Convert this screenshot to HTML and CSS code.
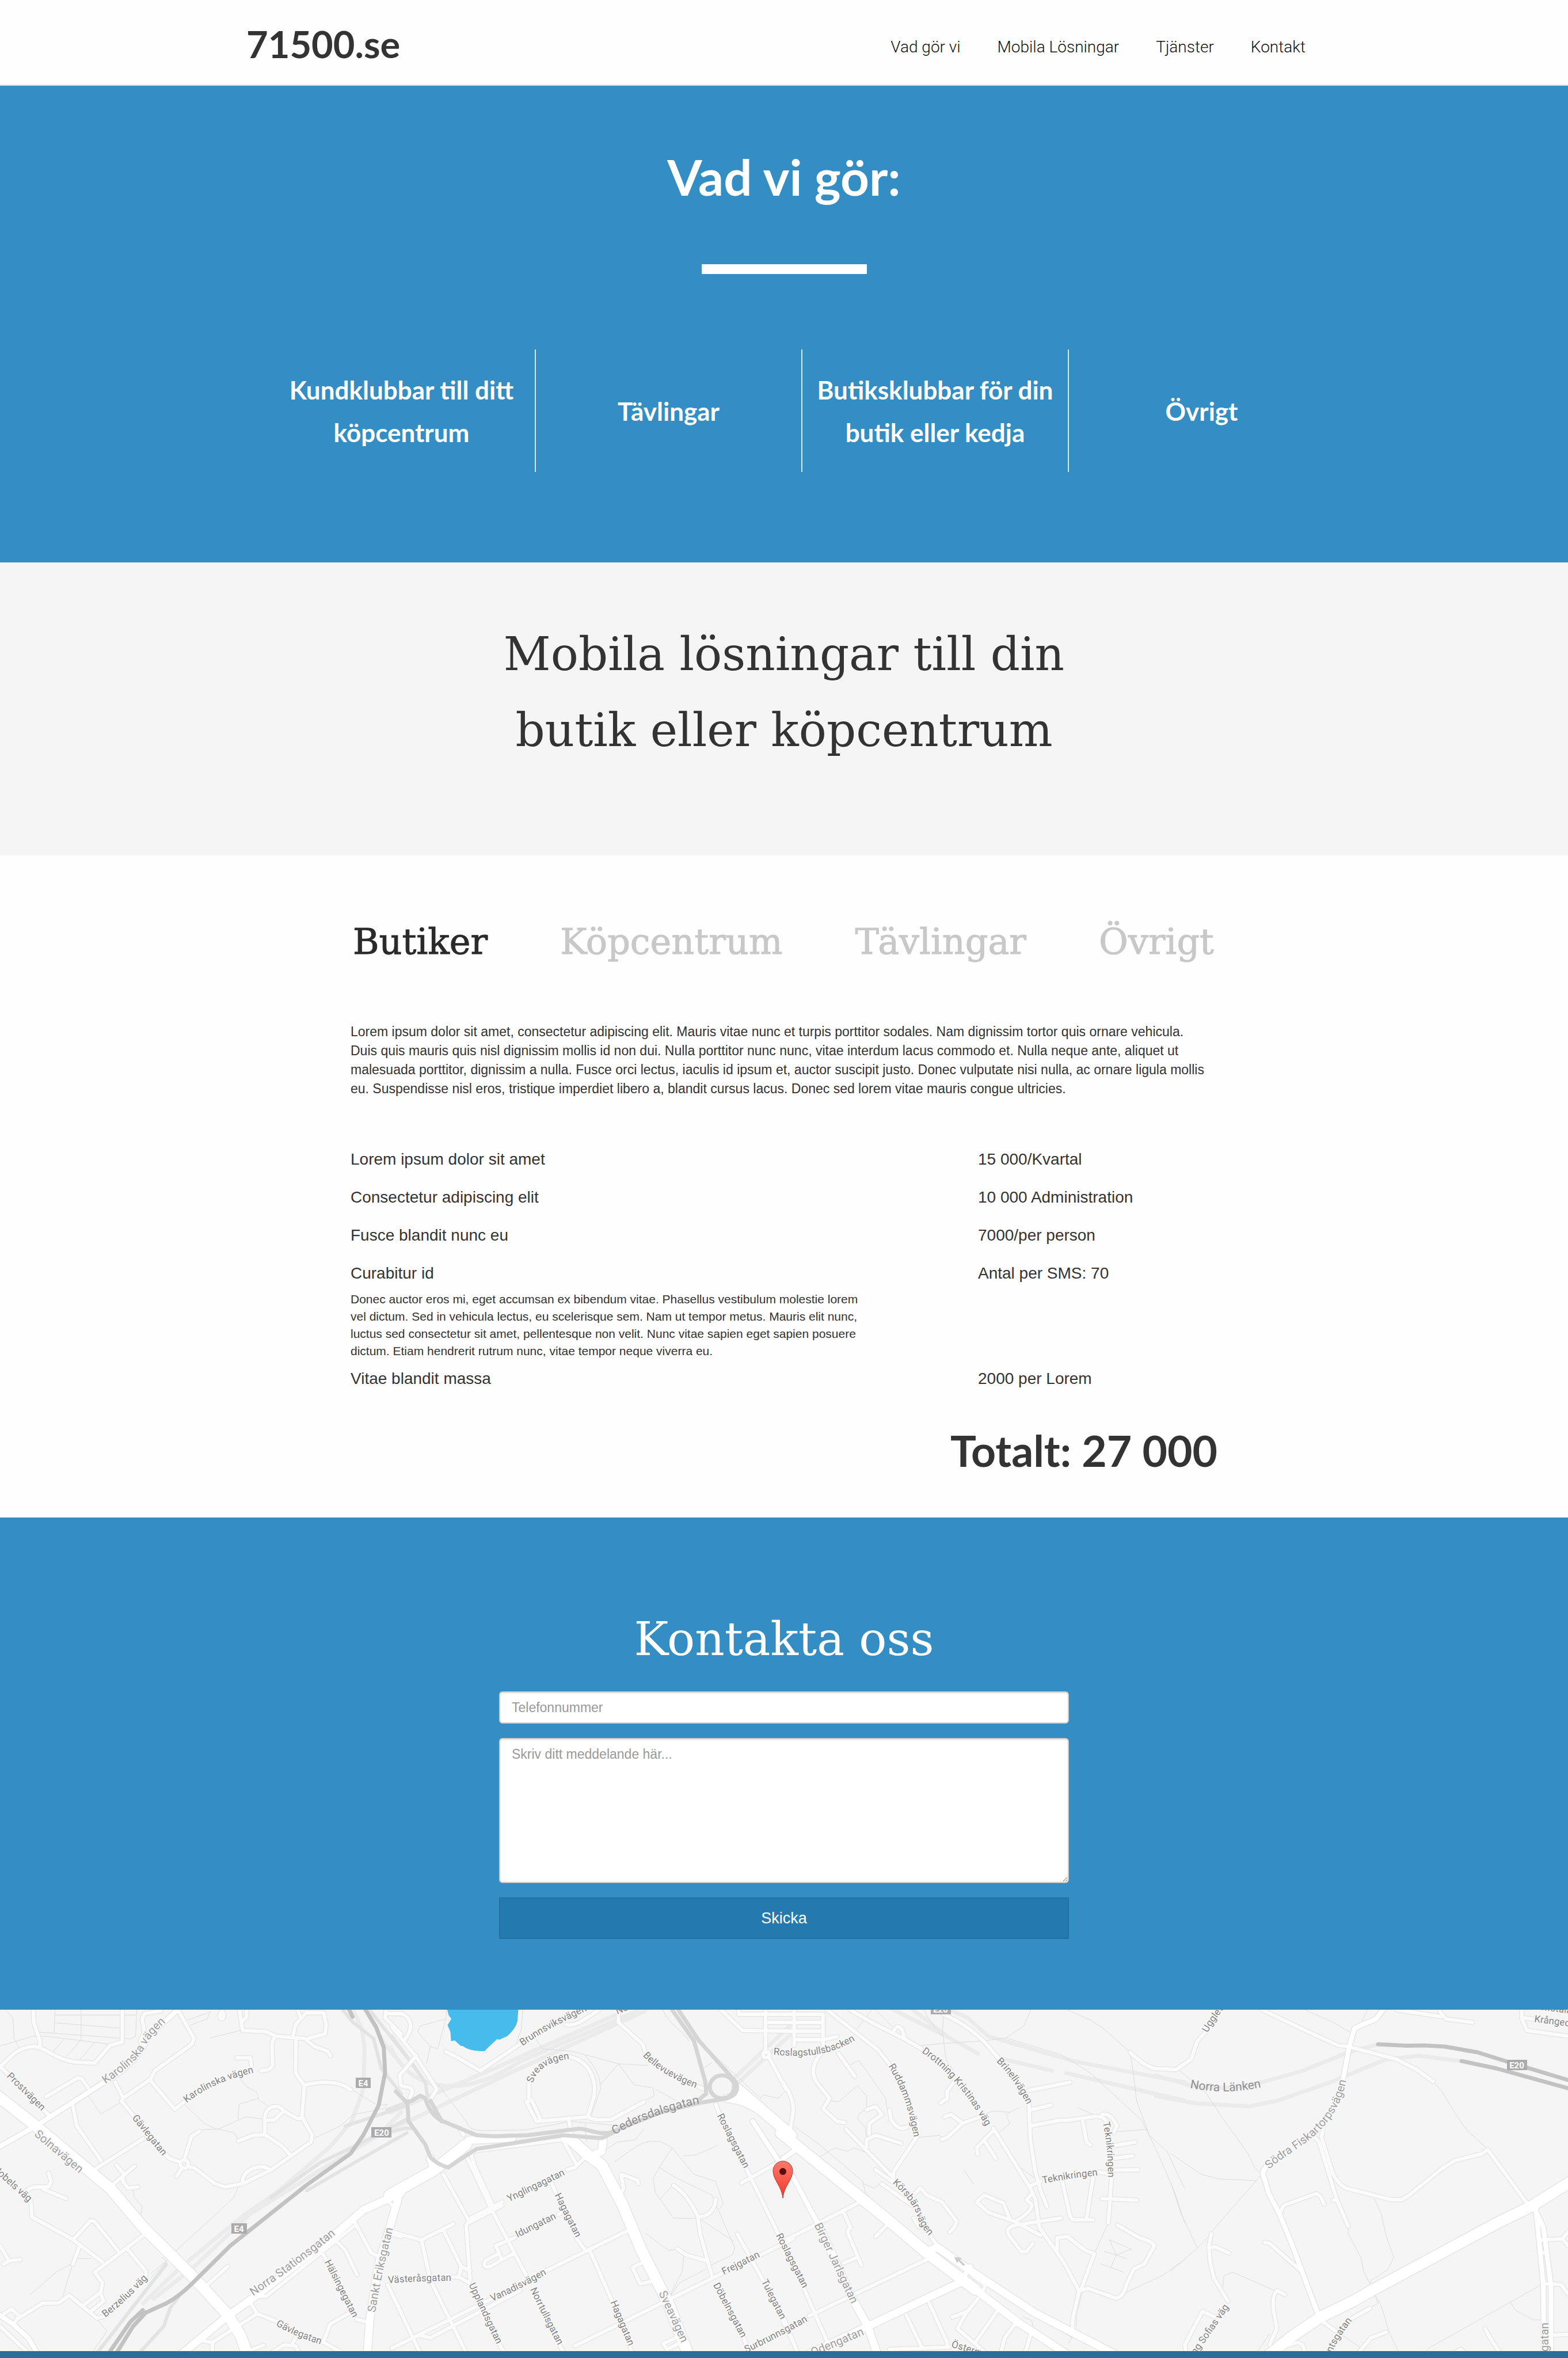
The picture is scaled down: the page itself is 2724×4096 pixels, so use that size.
FILE: index.html
```html
<!DOCTYPE html>
<html lang="sv">
<head>
<meta charset="utf-8">
<meta name="viewport" content="width=device-width, initial-scale=1">
<title>71500.se</title>
<link rel="stylesheet" href="styles.css">
</head>
<body>
<header class="site-header">
  <div class="container header-row">
    <a class="brand" href="#">71500.se</a>
    <nav class="main-nav">
      <a href="#gor">Vad gör vi</a>
      <a href="#mobila">Mobila Lösningar</a>
      <a href="#tjanster">Tjänster</a>
      <a href="#kontakt">Kontakt</a>
    </nav>
  </div>
</header>
<main>
  <section class="hero" id="gor">
    <h1 class="hero-title">Vad vi gör:</h1>
    <div class="hero-bar"></div>
    <ul class="container services">
      <li>Kundklubbar till ditt köpcentrum</li>
      <li>Tävlingar</li>
      <li>Butiksklubbar för din butik eller kedja</li>
      <li>Övrigt</li>
    </ul>
  </section>
  <section class="intro" id="mobila">
    <h2 class="slab-title">Mobila lösningar till din<br>butik eller köpcentrum</h2>
  </section>
  <section class="pricing" id="tjanster">
    <nav class="tabs">
      <a class="tab tab-active" href="#butiker">Butiker</a>
      <a class="tab" href="#kopcentrum">Köpcentrum</a>
      <a class="tab" href="#tavlingar">Tävlingar</a>
      <a class="tab" href="#ovrigt">Övrigt</a>
    </nav>
    <p class="lead">Lorem ipsum dolor sit amet, consectetur adipiscing elit. Mauris vitae nunc et turpis porttitor sodales. Nam dignissim tortor quis ornare vehicula. Duis quis mauris quis nisl dignissim mollis id non dui. Nulla porttitor nunc nunc, vitae interdum lacus commodo et. Nulla neque ante, aliquet ut malesuada porttitor, dignissim a nulla. Fusce orci lectus, iaculis id ipsum et, auctor suscipit justo. Donec vulputate nisi nulla, ac ornare ligula mollis eu. Suspendisse nisl eros, tristique imperdiet libero a, blandit cursus lacus. Donec sed lorem vitae mauris congue ultricies.</p>
    <table class="prices">
      <tbody>
        <tr><td>Lorem ipsum dolor sit amet</td><td>15 000/Kvartal</td></tr>
        <tr><td>Consectetur adipiscing elit</td><td>10 000 Administration</td></tr>
        <tr><td>Fusce blandit nunc eu</td><td>7000/per person</td></tr>
        <tr class="with-note"><td>Curabitur id<p class="note">Donec auctor eros mi, eget accumsan ex bibendum vitae. Phasellus vestibulum molestie lorem vel dictum. Sed in vehicula lectus, eu scelerisque sem. Nam ut tempor metus. Mauris elit nunc, luctus sed consectetur sit amet, pellentesque non velit. Nunc vitae sapien eget sapien posuere dictum. Etiam hendrerit rutrum nunc, vitae tempor neque viverra eu.</p></td><td>Antal per SMS: 70</td></tr>
        <tr><td>Vitae blandit massa</td><td>2000 per Lorem</td></tr>
      </tbody>
    </table>
    <p class="total">Totalt: 27 000</p>
  </section>
  <section class="contact" id="kontakt">
    <h2 class="slab-title">Kontakta oss</h2>
    <form class="contact-form">
      <input class="field" type="tel" placeholder="Telefonnummer" aria-label="Telefonnummer">
      <textarea class="field message" placeholder="Skriv ditt meddelande här..." aria-label="Meddelande"></textarea>
      <button class="send" type="submit">Skicka</button>
    </form>
  </section>
  <svg class="map" viewBox="0 0 2724 593" role="img" aria-label="Karta">
    <defs>
      <g id="minor">
        <path transform="translate(0 -22) scale(.4445 .4)" d="M130 50L132 110 156 190V215M0 305C40 260 70 215 135 215C180 220 215 270 290 282L370 287 430 210 478 195V50M180 433L305 350 320 355 345 395M555 215L550 190 565 150 555 95 565 72 630 60M700 65L758 180 750 205 605 320 590 355 480 440 475 452 660 700 700 715M450 370L480 435M590 365L683 487 720 455M925 264H978L983 300M1020 320L1050 315 1065 300 1063 200 1072 175M0 300L190 512M283 462L300 560 395 710M365 752L560 615M430 825L525 735M455 730L482 765 480 800 500 830 540 825M704 725a16 18 0 1 0 32 0a16 18 0 1 0 -32 0M720 708L748 605 780 583M710 745L690 778M740 738L760 742 840 810 880 825 950 810 1060 750 1215 630 1220 600 1180 520 1185 450 1190 385 1155 330 1157 185M948 800C945 760 1010 715 1055 750M935 50L948 145 1040 150 1080 170 1190 180 1230 215 1280 235 1292 255M965 50L962 90 948 105M1145 170L1155 120 1200 65M1165 60L1175 90M1200 68H1265L1275 120 1270 160 1205 180M1190 382Q1310 350 1370 402M932 625L990 600 1035 598 1100 645 1138 690M1035 590V530C1035 470 1090 460 1110 495L1160 527 1185 525M1045 535H1070L1110 495M1510 50L1505 90 1568 160M1515 72H1568M868 60Q850 90 866 95Q882 90 868 60M95 845L130 825H190L200 800 190 765M170 835L258 875M120 885L125 955 280 1050 400 1150M285 1055L355 970 370 975 460 1100M370 1195L560 1035M310 1085L285 1160M495 1090L570 1190V1225M370 1195L400 1240 395 1280 330 1335M390 1280L405 1320 355 1365M65 1400L165 1330 230 1328 270 1295 380 1395 410 1385M15 1375L45 1355 75 1385 60 1410M0 1430L110 1545M0 1080L35 1145 80 1140M35 1145L15 1160M805 1255L890 1170M975 1320L1005 1375 1085 1410M1005 1375L830 1500 770 1487M830 1500V1545M1260 1497L1330 1540M1000 1300L1040 1300 1390 990M1388 980L1450 1110 1475 1125M1310 1055L1350 1100 1395 1205M1255 1105L1275 1140M1395 1400L1440 1412M1265 1495L1290 1420 1370 1370M1140 1510L1165 1460M1060 1545L1110 1510 1155 1515 1168 1545M950 1545L1030 1512M1568 1040L1530 1030M1515 1250L1568 1370M1520 890L1540 915"/>
        <path transform="translate(681 -22) scale(.4445 .4)" d="M0 130L95 260 175 400 150 445M95 255L30 340 35 385 75 395 80 410 70 440M0 72H40Q100 110 50 185M210 237L260 265 345 320 500 205M680 120C720 130 760 90 810 55M885 75V110L980 205 990 240M1200 390L1220 400M535 445V370M665 255C760 260 800 340 790 430L765 520 565 540 525 455 545 445 580 530M765 520Q790 540 860 530L985 455M690 525L700 590M668 620L718 722M320 720L310 690Q310 670 340 665L660 620M265 570L280 600M895 855L905 830 895 770 960 795 962 810M295 700L390 925 530 1220M315 715L400 920M200 770L300 970M300 965L430 890M300 980L430 905M760 690L715 740 685 750M305 1230L290 990 300 975M240 985L115 1055 0 1020M200 1010L270 1170 305 1190M270 1175L260 1215 300 1240M115 1055L150 1230 290 1545M240 1215L260 1217M480 1045L405 1080 430 1140 475 1115M415 1115L365 1145Q350 1180 385 1170L430 1140M650 945L665 935M625 810L640 850M720 1045L755 1100M775 1105L860 1320M925 1510L940 1545M920 1015L600 1190M390 1310L0 1525M500 1275L150 1480 110 1470M0 1290L110 1545M420 1510L440 1545M655 1510L670 1545M715 1515L1290 1200M1440 1120L1568 1050M975 1155L940 1175 970 1245 1015 1235M1110 1480L1060 1505 1075 1530 1120 1505M1265 465L1280 510M1385 745L1510 1030M1365 808L1530 705M1100 818Q1150 850 1195 950L1205 1030 1250 1210M1195 955Q1260 950 1265 880M1115 1093L1150 1120 1230 1145M1350 1030L1450 1230M1525 1400L1568 1500M1375 1480L1395 1545M1355 50V75H1568M1460 50V240M1460 110H1568M1285 55L1370 145 1568 148M1450 250a12 13 0 1 0 24 0a12 13 0 1 0 -24 0M1475 265L1540 400"/>
        <path transform="translate(1361 -22) scale(.4445 .4)" d="M0 75H155V240M0 110H155M0 148H155M42 50V210M42 185H155L210 172M150 240Q95 310 130 370L180 440 155 485 210 540 240 545M215 245L280 345M170 55L370 230 420 300M520 610L430 760V800M260 55L345 110 470 180 540 225M430 150Q445 110 465 145L475 180M625 75Q720 120 790 200L840 265M960 465L965 620 985 760 1005 840 1030 910M960 405L1120 370M965 490L1045 470M965 560L1080 535H1110L1220 518Q1260 520 1262 545M1245 510Q1280 500 1303 560L1290 590M1168 530L1185 630 1200 642M820 570L965 830 985 880 1000 1000 1070 1110 1100 1160 1155 1275M1290 645L1375 630M1295 700L1365 690M1285 752L1385 750M1230 760L1285 768M1282 790L1270 980M1245 875L1380 882M1210 785L1185 960M1090 800L1120 950 1130 967H1210M965 820L1005 800M970 855L950 880 970 900Q975 930 905 975L800 935 755 890 785 860 860 895 885 965M905 975L1005 1035M1085 960L910 990Q860 1000 885 1040L930 1105H950L975 1070M1070 1100V1045L1110 1040 1180 1100 1215 1115 1165 1265M1155 1275L1190 1265 1300 1308Q1330 1300 1340 1250L1370 1180 1410 1160 1450 1080Q1440 1060 1390 1045L1305 990M1155 1280L1130 1400V1435M415 490L420 530Q450 590 490 560M325 490L360 475 385 510 335 550V595M460 635L360 600 325 620V650M245 575L430 785M360 750L430 805M385 812L510 910M505 865L535 828 560 860 620 890 675 970Q680 990 650 1020M510 960L530 1000M575 1040L605 1085M630 520L655 510 700 548 770 520M700 548L640 610 620 618M665 370L640 410V440L615 460M820 580L785 620 755 655 760 682M785 625L830 700M0 1060L300 890M235 935L262 1000 250 1020 305 1165M360 1040L405 990M560 1140L100 1385M235 1155L290 1130M80 1265L190 1545M0 1390L55 1545M415 1530L650 1520M480 1380L540 1520M570 1330L640 1500V1520M660 1390L720 1365 760 1310M720 1360L680 1440 790 1545M835 1365L750 1500M905 1420L865 1480 850 1545M965 1470L945 1545M1355 240Q1410 300 1450 310L1535 315 1568 290M-3 370Q50 450 35 520L25 580M740 1210L790 1250 780 1275 750 1270"/>
        <path transform="translate(2034 -22) scale(.4403 .4)" d="M360 55L540 150 660 210 700 215 890 270 970 315 1035 367M-5 315H20L80 270 105 190 135 155M890 55L1065 85M1060 60L1085 95 1190 110M1385 50V95L1405 145 1568 170M1390 90L1430 95M560 600L585 630 655 880 700 995M600 570L595 610 640 770Q660 810 690 830L870 880 910 880 935 865 1070 745 1120 710 1230 680 1250 662 1405 895M430 940L445 905 575 853 590 865 605 900M640 883L655 880M370 1065L390 1070 520 1195M160 1028L150 1080 155 1150 170 1220 225 1320M155 1088L175 1085 230 1112M450 1292L420 1275Q400 1290 405 1360L418 1440 390 1510M60 1545L55 1510 125 1365 175 1390M600 1410L650 1450M715 1395L785 1352M740 1545L790 1480 850 1455M1240 1440L1265 1490 1300 1545M1455 1055L1545 1050 1568 1020M1545 1050L1568 1080M1465 1110H1485M1470 1245L1540 1248 1568 1290M1510 1468L1568 1465M440 1520L500 1500 520 1510 530 1545M1120 1545L1145 1530 1160 1545"/>
      </g>
      <g id="mid">
        <path transform="translate(0 -22) scale(.4445 .4)" d="M-10 655L150 553 400 375Q540 290 580 170L700 50M-10 1375L50 1420 110 1480 145 1545"/>
        <path transform="translate(1361 -22) scale(.4445 .4)" d="M-120 540L-20 710M0 700L60 655M20 745L130 975M690 1240L730 1170"/>
        <path transform="translate(2034 -22) scale(.4403 .4)" d="M840 50L810 95 725 135 705 210 680 355M375 740Q355 760 370 790L385 850 430 945 480 1080 580 1375M1440 920L1445 970 1470 1250 1472 1545M1435 920L1470 1000 1500 1250V1545"/>
      </g>
      <g id="wide">
        <path transform="translate(0 -22) scale(.4445 .4)" d="M700 1560L890 1385 1010 1290 1300 1040 1420 925 1568 850M1435 1560L1445 1400 1480 1160 1550 900 1560 850"/>
        <path transform="translate(681 -22) scale(.4445 .4)" d="M300 622L470 612M160 735L150 700M825 615L820 670 780 690M1310 440Q1400 450 1480 530"/>
        <path transform="translate(1361 -22) scale(.4445 .4)" d="M690 1240L330 1430 100 1550M135 985L270 1310 330 1430 370 1560M560 1110L600 1085 720 1180 980 1370 1310 1560M750 1270L920 1415 1120 1560"/>
      </g>
      <g id="major">
        <path transform="translate(0 -22) scale(.4445 .4)" d="M-20 420L140 560 430 830 560 1000 750 1210 890 1380 940 1470 970 1560"/>
        <path transform="translate(681 -22) scale(.4445 .4)" d="M-10 860L30 835 160 755 290 640M680 600L730 650 770 690 820 730 900 900 975 1100 1080 1330 1160 1560M1350 400L1560 600"/>
        <path transform="translate(1361 -22) scale(.4445 .4)" d="M-10 590L400 960 560 1110 750 1270"/>
        <path transform="translate(2034 -22) scale(.4403 .4)" d="M360 1580L470 1480 590 1390 720 1320 800 1270 1290 980 1420 910 1580 800"/>
      </g>
      <path id="l1" transform="translate(0 -22) scale(.4445 .4)" d="M25 345L185 520"/>
      <path id="l2" transform="translate(0 -22) scale(.4445 .4)" d="M412 378C500 310 550 260 575 200Q600 150 690 70"/>
      <path id="l3" transform="translate(0 -22) scale(.4445 .4)" d="M730 460Q840 360 1020 322"/>
      <path id="l4" transform="translate(0 -22) scale(.4445 .4)" d="M515 525L660 725"/>
      <path id="l5" transform="translate(0 -22) scale(.4445 .4)" d="M132 600L340 795"/>
      <path id="l6" transform="translate(0 -22) scale(.4445 .4)" d="M-30 750L130 910"/>
      <path id="l7" transform="translate(0 -22) scale(.4445 .4)" d="M412 1392Q510 1305 600 1195"/>
      <path id="l8" transform="translate(0 -22) scale(.4445 .4)" d="M990 1298C1080 1230 1230 1110 1350 995"/>
      <path id="l9" transform="translate(0 -22) scale(.4445 .4)" d="M1467 1370Q1490 1200 1545 970"/>
      <path id="l10" transform="translate(0 -22) scale(.4445 .4)" d="M1268 1150L1400 1440"/>
      <path id="l11" transform="translate(0 -22) scale(.4445 .4)" d="M1078 1425Q1150 1475 1290 1522"/>
      <path id="l12" transform="translate(681 -22) scale(.4445 .4)" d="M-14 1243Q100 1232 280 1232"/>
      <path id="l13" transform="translate(681 -22) scale(.4445 .4)" d="M510 213C590 150 660 110 800 40"/>
      <path id="l14" transform="translate(681 -22) scale(.4445 .4)" d="M880 75L960 40"/>
      <path id="l15" transform="translate(681 -22) scale(.4445 .4)" d="M550 375Q575 280 700 268"/>
      <path id="l16" transform="translate(681 -22) scale(.4445 .4)" d="M980 255Q1060 350 1230 412"/>
      <path id="l17" transform="translate(681 -22) scale(.4445 .4)" d="M870 598Q1000 510 1250 450"/>
      <path id="l18" transform="translate(681 -22) scale(.4445 .4)" d="M1270 515L1400 800"/>
      <path id="l19" transform="translate(681 -22) scale(.4445 .4)" d="M1500 1035L1640 1340"/>
      <path id="l20" transform="translate(681 -22) scale(.4445 .4)" d="M1490 250C1640 265 1730 250 1850 160"/>
      <path id="l21" transform="translate(681 -22) scale(.4445 .4)" d="M458 890L720 748"/>
      <path id="l22" transform="translate(681 -22) scale(.4445 .4)" d="M490 1045L690 935"/>
      <path id="l23" transform="translate(681 -22) scale(.4445 .4)" d="M635 860L745 1105"/>
      <path id="l24" transform="translate(681 -22) scale(.4445 .4)" d="M392 1322Q500 1270 650 1175"/>
      <path id="l25" transform="translate(681 -22) scale(.4445 .4)" d="M300 1250Q350 1370 440 1580"/>
      <path id="l26" transform="translate(681 -22) scale(.4445 .4)" d="M540 1270Q590 1390 680 1580"/>
      <path id="l27" transform="translate(681 -22) scale(.4445 .4)" d="M853 1325L945 1570"/>
      <path id="l28" transform="translate(681 -22) scale(.4445 .4)" d="M1042 1285L1155 1560"/>
      <path id="l29" transform="translate(681 -22) scale(.4445 .4)" d="M1255 1250L1400 1555"/>
      <path id="l30" transform="translate(681 -22) scale(.4445 .4)" d="M1443 1235L1550 1470"/>
      <path id="l31" transform="translate(681 -22) scale(.4445 .4)" d="M1297 1207L1490 1100"/>
      <path id="l32" transform="translate(681 -22) scale(.4445 .4)" d="M1385 1545Q1490 1490 1670 1380"/>
      <path id="l33" transform="translate(1361 -22) scale(.4445 .4)" d="M410 300Q490 440 515 650"/>
      <path id="l34" transform="translate(1361 -22) scale(.4445 .4)" d="M540 240Q700 360 820 620"/>
      <path id="l35" transform="translate(1361 -22) scale(.4445 .4)" d="M832 280Q915 370 970 510"/>
      <path id="l36" transform="translate(1361 -22) scale(.4445 .4)" d="M425 808Q510 890 525 960Q545 1020 610 1080"/>
      <path id="l37" transform="translate(1361 -22) scale(.4445 .4)" d="M1015 810Q1120 785 1270 770"/>
      <path id="l38" transform="translate(1361 -22) scale(.4445 .4)" d="M1248 545Q1272 660 1268 840"/>
      <path id="l39" transform="translate(1361 -22) scale(.4445 .4)" d="M120 990L290 1390"/>
      <path id="l40" transform="translate(1361 -22) scale(.4445 .4)" d="M115 1560L340 1455"/>
      <path id="l41" transform="translate(1361 -22) scale(.4445 .4)" d="M655 1520Q760 1550 900 1620"/>
      <path id="l42" transform="translate(2034 -22) scale(.4403 .4)" d="M145 155Q175 90 250 0"/>
      <path id="l43" transform="translate(2034 -22) scale(.4403 .4)" d="M75 395Q240 430 400 380"/>
      <path id="l44" transform="translate(2034 -22) scale(.4403 .4)" d="M388 748C480 650 670 600 700 310"/>
      <path id="l45" transform="translate(2034 -22) scale(.4403 .4)" d="M1433 108L1800 160"/>
      <path id="l46" transform="translate(2034 -22) scale(.4403 .4)" d="M1462 56L1700 90"/>
      <path id="l47" transform="translate(2034 -22) scale(.4403 .4)" d="M1490 1540V1350"/>
      <path id="l48" transform="translate(2034 -22) scale(.4403 .4)" d="M98 1555Q180 1430 250 1310"/>
      <path id="l49" transform="translate(2034 -22) scale(.4403 .4)" d="M635 1545Q665 1470 740 1370"/>
      <linearGradient id="pin" x1="0" y1="0" x2="0" y2="1"><stop offset="0" stop-color="#fb7a6c"/><stop offset="1" stop-color="#f2392b"/></linearGradient>
    </defs>
    <rect class="land" width="2724" height="593"/>
    <path class="water" transform="translate(681 -22) scale(.4445 .4)" d="M215 50L222 80 232 95 217 122 228 150 231 192 245 188 268 212 278 213Q300 235 362 235L375 220 410 183 420 185 450 170Q490 130 491 95L494 50Z"/>
    <g class="tunnel">
      <path transform="translate(0 -22) scale(.4445 .4)" d="M1380 55L1415 140 1425 220 1420 400 1375 540 1290 650 1080 850 950 950 700 1180 560 1330M1430 55L1500 200 1568 290M1568 500L1480 600 1240 760 980 940 750 1180 600 1310"/>
      <path transform="translate(681 -22) scale(.4445 .4)" d="M-5 220Q60 370 200 385T500 280L960 60M-5 500L400 310 540 240 870 80M-5 575L500 310 990 60M1340 350L1560 120M1355 370L1580 140"/>
      <path transform="translate(1361 -22) scale(.4445 .4)" d="M420 50L620 160 760 245M500 50L640 170M650 55L720 90 800 170 1140 280 1568 370M860 270L1050 320M1105 330L1568 450"/>
      <path transform="translate(2034 -22) scale(.4403 .4)" d="M-60 340L80 385Q220 410 360 370L520 320 700 240 820 205M-60 430L100 462 310 475 420 450 630 370 850 270 980 255 1145 278"/>
    </g>
    <g class="rail">
      <path transform="translate(0 -22) scale(.4445 .4)" d="M1335 50L1380 110 1460 180 1490 310 1568 420M1590 470L1500 505 1350 560M1590 530L1400 640 1250 720 1060 870M1590 590L1400 710 1200 840M650 1160L380 1545M700 1300L665 1350 640 1430 545 1545M1440 50L1590 260"/>
      <path transform="translate(681 -22) scale(.4445 .4)" d="M-20 490L60 455M-20 590L50 570 80 570M0 170L130 370 140 440M80 290L130 370"/>
    </g>
    <g class="walk">
      <path transform="translate(0 -22) scale(.4445 .4)" d="M0 213L130 170H180L430 205M20 55L50 90 55 180 75 220M215 50L212 155M215 78H530M215 112L470 135M150 152L510 182 530 170 535 50M317 55V185L255 265M250 183L205 240M370 198L310 275M735 100L820 65M745 122L810 95 822 60M820 178L940 145M345 430L395 508 480 452M720 465L800 550 850 575 930 535 960 520 1030 530M930 530L935 465 1010 440M930 345L965 390 1005 415 1010 445 1050 475M790 577L850 573 915 590 930 615M1230 612L1330 560 1380 510 1500 485 1515 465 1475 470 1380 405M930 825L915 870 685 1105 590 1220M520 840L525 870 557 910 550 945M630 1130L650 1145 590 1200M120 1290L225 1190 285 1155 245 1300M300 1135L355 1136M380 1400L418 1450 360 1545"/>
      <path transform="translate(681 -22) scale(.4445 .4)" d="M215 50L210 95 110 125 100 150 150 215 180 225M210 95L180 220M150 215L135 290M512 50L505 140 485 205M560 180L590 225 700 235 770 255 885 290 1000 297M750 250Q815 320 815 400L780 510M885 290L815 380M885 290L945 380 1020 395 1025 430 985 450M1055 50Q1080 110 1140 160L1160 190M1030 400L1110 450M180 380L290 540Q300 580 350 580L520 577 700 540 900 560M755 550L760 630M840 660L880 630 950 620 985 573M1205 320L1250 285M870 715L960 645Q1000 620 1050 628L1095 655 1180 770 1265 800 1295 900 1280 920M1095 655L1045 740 1020 790 1030 850 1100 960 1195 962M1095 820L1045 880M1045 740L1110 785 1250 860 1340 1090 1330 1120 1245 1165M990 1025L1080 1100 1115 1095M1205 965L1335 1060M1140 1125L1135 1190 1080 1310M1230 1180L1125 1240 1080 1310M1140 690L1190 685 1275 643M1115 55L1200 190 1440 440 1450 425 1510 440 1535 410"/>
      <path transform="translate(1361 -22) scale(.4445 .4)" d="M345 55L280 150M360 55L430 135M550 55L565 90 620 170M625 90L622 150 635 270 665 320M540 210L640 200 785 190 870 178 940 125 967 55M870 178L1085 250 1200 330 1400 535 1430 600 1480 720 1530 850 1568 980M1100 50L1200 100 1255 140 1355 240 1370 350 1380 450 1430 600 1500 670 1545 780 1568 830M1300 585L1420 575M180 450L215 455 290 385 325 430V490Q290 500 290 530L320 565 325 610M260 295L295 275 400 440 405 490M40 560L140 640 310 800 320 850 380 915M140 695L200 655 250 670 275 655 335 680M530 610L610 600 620 610M840 590L885 550 870 510 920 480M780 510L820 495 885 500M1150 480L1210 510M1270 980L1215 1115M1335 1285L1480 1210 1568 1140M310 810L355 830 385 805M800 1260L970 1380 1130 1480M935 1388L970 1405 975 1430M1145 1430V1380L1168 1280M1130 1470L1115 1505M1275 1055L1300 1120 1360 1095 1275 1055M1255 1105L1300 1120 1340 1135M1300 1120L1280 1175M1240 1158L1330 1195M705 750L742 810M925 740L980 785"/>
      <path transform="translate(2034 -22) scale(.4403 .4)" d="M35 320L135 410 200 520 305 680 330 740 355 765M355 775L215 950 160 1020M0 680L120 770 190 790 335 797M0 805L40 940 105 1090 150 1040M0 1190L105 1090M205 1260L210 1210 245 1195 410 1275M530 55L650 115 710 155M755 105L778 50M1035 367L1070 410 1130 520 1170 580 1250 660M800 870L830 940 850 1040 880 1130 855 1185 790 1230 785 1245M700 1000V1030L750 1130 760 1190 790 1255 818 1330 785 1350M805 1290L830 1340 860 1450 900 1545M1000 1545L1025 1520 1340 1325 1460 1250M1340 1325L1360 1360 1430 1402H1460M340 1545L390 1460M680 1470L745 1520"/>
    </g>
    <use href="#minor" class="minor-edge"/>
    <use href="#mid" class="mid-edge"/>
    <use href="#wide" class="wide-edge"/>
    <use href="#major" class="major-edge"/>
    <use href="#minor" class="minor-fill"/>
    <use href="#mid" class="mid-fill"/>
    <use href="#wide" class="wide-fill"/>
    <use href="#major" class="major-fill"/>
    <path class="ramp" transform="translate(681 -22) scale(.4445 .4)" d="M15 410L60 460 65 540 130 640 150 695C170 720 200 735 220 740L260 710 330 660 670 600 820 613 870 585M55 455L75 452 110 428 130 440Q150 510 190 535L330 600 400 605 530 600 730 572C780 575 790 595 850 590L1050 500 1200 460 1310 440Q1360 420 1345 370L1200 190 1110 40M150 450L195 540M1085 40L1180 190 1225 370 1228 420 1200 445M1242 390a48 50 0 1 1 96 0a48 50 0 1 1 -96 0"/>
    <g class="motorway">
      <path transform="translate(0 -22) scale(.4445 .4)" d="M1420 40L1470 130 1500 220 1505 330 1480 470 1420 600 1370 680 1200 815 900 1080 750 1245Q700 1300 650 1330L570 1370 520 1430 450 1555M558 1360L510 1410 420 1555M1360 45L1378 85"/>
      <path transform="translate(2034 -22) scale(.4403 .4)" d="M818 205L930 211 1000 210 1080 215 1210 240 1340 285 1590 368M1147 278L1285 310 1590 403"/>
    </g>
    <path class="arrow" transform="translate(1361 -22) scale(.4445 .4)" d="M668 1128L698 1134 690 1141 710 1162 704 1168 684 1147 678 1155Z"/>
    <g class="street">
      <text><textPath href="#l1">Prostvägen</textPath></text>
      <text><textPath href="#l3">Karolinska vägen</textPath></text>
      <text><textPath href="#l4">Gävlegatan</textPath></text>
      <text><textPath href="#l6">Nobels väg</textPath></text>
      <text><textPath href="#l7">Berzelius väg</textPath></text>
      <text><textPath href="#l10">Hälsingegatan</textPath></text>
      <text><textPath href="#l11">Gävlegatan</textPath></text>
      <text><textPath href="#l12">Västeråsgatan</textPath></text>
      <text><textPath href="#l13">Brunnsviksvägen</textPath></text>
      <text><textPath href="#l14">Nor</textPath></text>
      <text><textPath href="#l15">Sveavägen</textPath></text>
      <text><textPath href="#l16">Bellevuevägen</textPath></text>
      <text><textPath href="#l18">Roslagsgatan</textPath></text>
      <text><textPath href="#l19">Roslagsgatan</textPath></text>
      <text><textPath href="#l20">Roslagstullsbacken</textPath></text>
      <text><textPath href="#l21">Ynglingagatan</textPath></text>
      <text><textPath href="#l22">Idungatan</textPath></text>
      <text><textPath href="#l23">Hagagatan</textPath></text>
      <text><textPath href="#l24">Vanadisvägen</textPath></text>
      <text><textPath href="#l25">Upplandsgatan</textPath></text>
      <text><textPath href="#l26">Norrtullsgatan</textPath></text>
      <text><textPath href="#l27">Hagagatan</textPath></text>
      <text><textPath href="#l29">Döbelnsgatan</textPath></text>
      <text><textPath href="#l30">Tulegatan</textPath></text>
      <text><textPath href="#l31">Frejgatan</textPath></text>
      <text><textPath href="#l32">Surbrunnsgatan</textPath></text>
      <text><textPath href="#l33">Ruddammsvägen</textPath></text>
      <text><textPath href="#l34">Drottning Kristinas väg</textPath></text>
      <text><textPath href="#l35">Brinellvägen</textPath></text>
      <text><textPath href="#l36">Körsbärsvägen</textPath></text>
      <text><textPath href="#l37">Teknikringen</textPath></text>
      <text><textPath href="#l38">Teknikringen</textPath></text>
      <text><textPath href="#l41">Östermalmsgatan</textPath></text>
      <text><textPath href="#l42">Ugglevägen</textPath></text>
      <text><textPath href="#l45">Krångedevägen</textPath></text>
      <text><textPath href="#l46">Motalavägen</textPath></text>
      <text><textPath href="#l48">ng Sofias väg</textPath></text>
      <text><textPath href="#l49">ntsgatan</textPath></text>
    </g>
    <g class="avenue">
      <text><textPath href="#l2">Karolinska vägen</textPath></text>
      <text><textPath href="#l5">Solnavägen</textPath></text>
      <text><textPath href="#l8">Norra Stationsgatan</textPath></text>
      <text><textPath href="#l9">Sankt Eriksgatan</textPath></text>
      <text><textPath href="#l28">Sveavägen</textPath></text>
      <text><textPath href="#l39">Birger Jarlsgatan</textPath></text>
      <text><textPath href="#l40">Odengatan</textPath></text>
      <text><textPath href="#l44">Södra Fiskartorpsvägen</textPath></text>
      <text><textPath href="#l47">gatan</textPath></text>
    </g>
    <g class="highway">
      <text><textPath href="#l17">Cedersdalsgatan</textPath></text>
      <text><textPath href="#l43">Norra Länken</textPath></text>
    </g>
    <g class="shield">
      <rect x="618" y="118" width="26" height="18"/><text x="631" y="133">E4</text>
      <rect x="402" y="371" width="27" height="18"/><text x="415" y="386">E4</text>
      <rect x="645" y="204" width="35" height="18"/><text x="663" y="219">E20</text>
      <rect x="1617" y="-10" width="35" height="18"/><text x="1634" y="5">E20</text>
      <rect x="2618" y="87" width="35" height="18"/><text x="2635" y="102">E20</text>
    </g>
    <path class="pin" d="M1360 327C1358 306 1343 296 1343 280A17 17 0 0 1 1377 280C1377 296 1362 306 1360 327Z"/>
    <circle class="pin-dot" cx="1360" cy="281" r="6"/>
  </svg>
</main>
<footer class="site-footer"></footer>
</body>
</html>
```
FILE: styles.css
```css
* { box-sizing: border-box; }
body {
  margin: 0;
  background: #fefefe;
  color: #333;
  font-family: "Liberation Sans", Arial, sans-serif;
  font-size: 23px;
  line-height: 33px;
}
h1, h2, p, ul { margin: 0; padding: 0; }
a { color: inherit; text-decoration: none; }

.container {
  max-width: 1920px;
  margin: 0 auto;
}

.site-header { border-bottom: 2px solid #ddd; }
.header-row {
  display: flex;
  justify-content: space-between;
  align-items: center;
  min-height: 147px;
  padding: 0 54px 0 26px;
}
.brand {
  padding-top: 4px;
  font: 700 65px/80px Lato, sans-serif;
}
.main-nav {
  display: flex;
  gap: 64px;
  padding-top: 16px;
  font: 300 28px/34px Roboto, sans-serif;
  color: #111;
}

.hero, .contact {
  background: #358ec3;
  color: #fff;
  text-align: center;
}
.hero { padding: 96px 0 157px; }
.hero-title { font: 700 87px/124px Lato, sans-serif; }
.hero-bar {
  width: 287px;
  height: 17px;
  margin: 90px auto 131px;
  background: #fff;
}
.services {
  display: grid;
  grid-template-columns: repeat(4, 1fr);
  padding: 0 4px 0 64px;
  list-style: none;
  font: 700 44px/74px Lato, sans-serif;
}
.services li {
  display: flex;
  align-items: center;
  justify-content: center;
  min-height: 213px;
  padding: 0 12px;
}
.services li + li { border-left: 2px solid #d7e8f3; }

.slab-title {
  font: 400 80px/132px "DejaVu Serif", serif;
}
.intro {
  padding: 94px 0 151px;
  background: #f5f5f5;
  text-align: center;
}

.pricing {
  max-width: 1554px;
  margin: 0 auto;
  padding: 94px 24px 72px;
}
.tabs {
  display: flex;
  justify-content: space-between;
  padding: 0 6px 0 4px;
  font: 400 62px/112px "DejaVu Serif", serif;
  color: #c8c8c8;
  -webkit-text-stroke: 1px currentColor;
}
.tab-active { color: #2a2a2a; }
.lead {
  max-width: 1492px;
  margin-top: 84px;
}
.prices {
  width: 100%;
  margin-top: 73px;
  border-collapse: collapse;
  font-size: 28px;
  line-height: 38px;
}
.prices td {
  padding: 14px 0;
  vertical-align: top;
}
.prices td:last-child { width: 416px; }
.prices .with-note td { padding-bottom: 0; }
.note {
  max-width: 890px;
  margin-top: 11px;
  font-size: 21px;
  line-height: 30px;
}
.total {
  margin-top: 46px;
  font: 700 75px/90px Lato, sans-serif;
  text-align: right;
}

.contact { padding: 146px 24px 123px; }
.contact-form {
  display: grid;
  gap: 25px;
  max-width: 990px;
  margin: 24px auto 0;
}
.field {
  display: block;
  width: 100%;
  height: 56px;
  padding: 10px 20px;
  border: 2px solid #ccc;
  border-radius: 6px;
  background: #fff;
  box-shadow: inset 0 2px 2px rgba(0, 0, 0, .08);
  color: #333;
  font: 23px/32px "Liberation Sans", Arial, sans-serif;
}
.field::placeholder { color: #999; opacity: 1; }
.message { height: 252px; }
.send {
  height: 72px;
  border: 2px solid #2070a2;
  background: #247aaf;
  color: #fff;
  font: 27px/38px "Liberation Sans", Arial, sans-serif;
}

.map {
  display: block;
  width: 100%;
  overflow: hidden;
}
.map path {
  vector-effect: non-scaling-stroke;
  stroke-linecap: round;
  stroke-linejoin: round;
}
.land { fill: #f5f5f5; }
.water { fill: #46bcec; }
.tunnel, .rail, .walk, .ramp, .motorway, .map use { fill: none; }
.tunnel { stroke: #ebebeb; stroke-width: 7px; }
.rail { stroke: #e3e3e3; stroke-width: 6px; }
.walk { stroke: #dcdcdc; stroke-width: 1px; }
.minor-edge { stroke: #e7e7e7; stroke-width: 9px; }
.minor-fill { stroke: #fbfbfb; stroke-width: 6px; }
.mid-edge { stroke: #e5e5e5; stroke-width: 11px; }
.mid-fill { stroke: #fff; stroke-width: 8px; }
.wide-edge { stroke: #e5e5e5; stroke-width: 16px; }
.wide-fill { stroke: #fff; stroke-width: 13px; }
.major-edge { stroke: #e5e5e5; stroke-width: 22px; }
.major-fill { stroke: #fff; stroke-width: 19px; }
.ramp { stroke: #d5d5d5; stroke-width: 7px; }
.motorway { stroke: #c2c2c2; stroke-width: 7px; }
.arrow { fill: #ccc; }
.street, .avenue, .highway {
  font-family: Roboto, sans-serif;
  paint-order: stroke;
  stroke: #f8f8f8;
  stroke-width: 4px;
}
.street { fill: #828282; font-size: 17px; }
.avenue { fill: #a0a0a0; font-size: 20px; }
.highway { fill: #909090; font-size: 21px; stroke: none; }
.shield { fill: #ababab; }
.shield text {
  fill: #fff;
  font: 700 15px Roboto, sans-serif;
  text-anchor: middle;
}
.pin { fill: url(#pin); stroke: #b9352c; stroke-width: 1px; }
.pin-dot { fill: #5a0f0c; }

.site-footer { height: 12px; background: #2a6f9b; }
```
